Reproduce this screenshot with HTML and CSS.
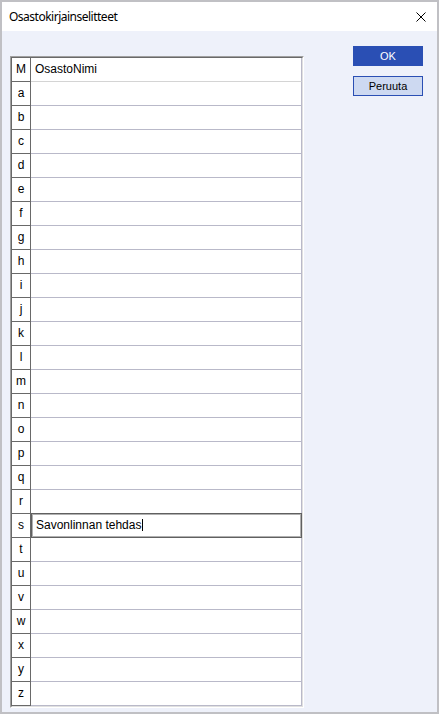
FILE: index.html
```html
<!DOCTYPE html>
<html>

<head>
    <title>Osastokirjainselitteet</title>
    <link rel="stylesheet" href="styles.css">
</head>

<body>
    <div class="window">
        <div class="titlebar">
            <span class="title">Osastokirjainselitteet</span>
            <svg class="close" width="10" height="10" viewBox="0 0 10 10">
                <path d="M0.5 0.5 L9.5 9.5 M9.5 0.5 L0.5 9.5" stroke="#000" stroke-width="1" fill="none" />
            </svg>
        </div>

        <div class="client">
            <!-- letter / department name grid -->
            <div class="frame">
                <div class="sheet">
                    <div class="row head"><div class="key">M</div><div class="name">OsastoNimi</div></div>
                    <div class="row"><div class="key">a</div><div class="name"></div></div>
                    <div class="row"><div class="key">b</div><div class="name"></div></div>
                    <div class="row"><div class="key">c</div><div class="name"></div></div>
                    <div class="row"><div class="key">d</div><div class="name"></div></div>
                    <div class="row"><div class="key">e</div><div class="name"></div></div>
                    <div class="row"><div class="key">f</div><div class="name"></div></div>
                    <div class="row"><div class="key">g</div><div class="name"></div></div>
                    <div class="row"><div class="key">h</div><div class="name"></div></div>
                    <div class="row"><div class="key">i</div><div class="name"></div></div>
                    <div class="row"><div class="key">j</div><div class="name"></div></div>
                    <div class="row"><div class="key">k</div><div class="name"></div></div>
                    <div class="row"><div class="key">l</div><div class="name"></div></div>
                    <div class="row"><div class="key">m</div><div class="name"></div></div>
                    <div class="row"><div class="key">n</div><div class="name"></div></div>
                    <div class="row"><div class="key">o</div><div class="name"></div></div>
                    <div class="row"><div class="key">p</div><div class="name"></div></div>
                    <div class="row"><div class="key">q</div><div class="name"></div></div>
                    <div class="row"><div class="key">r</div><div class="name"></div></div>
                    <div class="row edit"><div class="key">s</div><div class="name">Savonlinnan tehdas<span class="caret"></span></div></div>
                    <div class="row"><div class="key">t</div><div class="name"></div></div>
                    <div class="row"><div class="key">u</div><div class="name"></div></div>
                    <div class="row"><div class="key">v</div><div class="name"></div></div>
                    <div class="row"><div class="key">w</div><div class="name"></div></div>
                    <div class="row"><div class="key">x</div><div class="name"></div></div>
                    <div class="row"><div class="key">y</div><div class="name"></div></div>
                    <div class="row"><div class="key">z</div><div class="name"></div></div>
                </div>
            </div>

            <div class="buttons">
                <button class="btn ok">OK</button>
                <button class="btn cancel">Peruuta</button>
            </div>
        </div>
    </div>
</body>

</html>
```

FILE: styles.css
```css
/* dialog window */

html,
body {
    margin: 0;
    padding: 0;
}

body {
    width: 439px;
    height: 714px;
    font-family: "Liberation Sans", Arial, sans-serif;
    font-size: 12px;
    color: #000000;
}

.window {
    box-sizing: border-box;
    height: 714px;
    border: 2px solid #c0c0c4;
    background-color: #eef1fa;
    display: flex;
    flex-direction: column;
}

.titlebar {
    height: 29px;
    background-color: #ffffff;
    display: flex;
    align-items: center;
    padding: 0 11px 0 7px;
}

.title {
    flex: 1;
    font-family: "Segoe UI", "Noto Sans", sans-serif;
    font-size: 12px;
    letter-spacing: -0.5px;
}

.close {
    display: block;
}

.client {
    flex: 1;
    display: flex;
    align-items: flex-start;
    padding: 15px 14px 0 8px;
}

/* grid */

.frame {
    margin-top: 10px;
    border: 1px solid;
    border-color: #a0a0a0 #ffffff #ffffff #a0a0a0;
}

.sheet {
    width: 290px;
    border: 1px solid;
    border-color: #696969 #e0e0e0 #e0e0e0 #696969;
}

.row {
    display: flex;
    height: 24px;
}

.key,
.name {
    box-sizing: border-box;
    height: 24px;
    line-height: 23px;
    background-color: #ffffff;
    white-space: nowrap;
}

.key {
    width: 19px;
    text-align: center;
    border-right: 1px solid #696969;
    border-bottom: 1px solid #696969;
}

.name {
    flex: 1;
    padding-left: 4px;
    border-right: 1px solid #b9b9c9;
    border-bottom: 1px solid #b9b9c9;
}

.head .name {
    border-bottom-color: #d4d4d4;
}

.edit .name {
    position: relative;
    padding-left: 5px;
}

.edit .name::before {
    content: "";
    position: absolute;
    left: 0;
    right: -1px;
    top: -1px;
    bottom: -1px;
    border: 1px solid #606060;
    box-shadow: inset 0 0 0 1px #b0b0b0;
}

.caret {
    display: inline-block;
    width: 1px;
    height: 12px;
    margin-left: 1px;
    background-color: #000000;
    vertical-align: -2px;
}

/* buttons */

.buttons {
    margin-left: auto;
    width: 70px;
    display: flex;
    flex-direction: column;
    gap: 10px;
}

.btn {
    height: 20px;
    padding: 0;
    font-family: "Liberation Sans", Arial, sans-serif;
    font-size: 11px;
    border: 1px solid #2a4fb4;
}

.ok {
    background-color: #2a4fb4;
    color: #ffffff;
}

.cancel {
    background-color: #cdd9f1;
    color: #000000;
}
```
